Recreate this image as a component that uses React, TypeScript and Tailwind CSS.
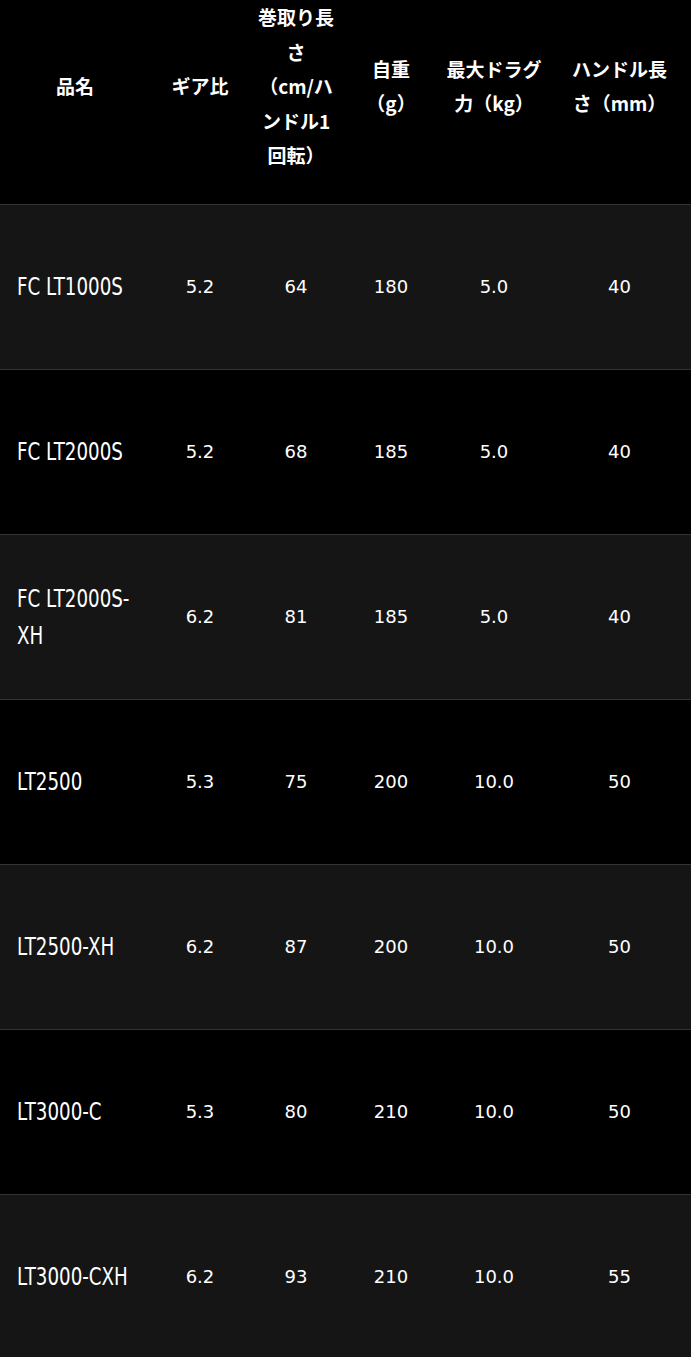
const rows = [
  { name: "FC LT1000S", gear: "5.2", retrieve: "64", weight: "180", drag: "5.0", handle: "40" },
  { name: "FC LT2000S", gear: "5.2", retrieve: "68", weight: "185", drag: "5.0", handle: "40" },
  { name: "FC LT2000S-\nXH", gear: "6.2", retrieve: "81", weight: "185", drag: "5.0", handle: "40" },
  { name: "LT2500", gear: "5.3", retrieve: "75", weight: "200", drag: "10.0", handle: "50" },
  { name: "LT2500-XH", gear: "6.2", retrieve: "87", weight: "200", drag: "10.0", handle: "50" },
  { name: "LT3000-C", gear: "5.3", retrieve: "80", weight: "210", drag: "10.0", handle: "50" },
  { name: "LT3000-CXH", gear: "6.2", retrieve: "93", weight: "210", drag: "10.0", handle: "55" },
];

const headers = [
  "品名",
  "ギア比",
  "巻取り長\nさ\n（cm/ハ\nンドル1\n回転）",
  "自重\n（g）",
  "最大ドラグ\n力（kg）",
  "ハンドル長\nさ（mm）",
];

export default function App() {
  return (
    <div className="w-[691px] bg-black text-white">
      <table className="w-full table-fixed border-collapse">
        <colgroup>
          <col className="w-[150px]" />
          <col className="w-[100px]" />
          <col className="w-[92px]" />
          <col className="w-[98px]" />
          <col className="w-[108px]" />
          <col className="w-[143px]" />
        </colgroup>
        <thead>
          <tr className="h-[204px] border-b border-[#333]">
            {headers.map((h, i) => (
              <th
                key={i}
                className="pb-[31px] align-middle text-center whitespace-pre-line font-bold text-[19px] leading-[34.5px] font-['Noto_Sans_CJK_JP',sans-serif]"
              >
                {h}
              </th>
            ))}
          </tr>
        </thead>
        <tbody>
          {rows.map((r, i) => (
            <tr
              key={i}
              className={`h-[165px] border-b border-[#333] ${i % 2 === 0 ? "bg-[#151515]" : "bg-black"}`}
            >
              <td className="pl-[17px] align-middle">
                <span className="inline-block origin-left scale-x-[0.73] whitespace-pre text-[25px] leading-[37px] font-['DejaVu_Sans',sans-serif]">
                  {r.name}
                </span>
              </td>
              {[r.gear, r.retrieve, r.weight, r.drag, r.handle].map((v, j) => (
                <td key={j} className="text-center text-[18px] font-['DejaVu_Sans',sans-serif]">
                  {v}
                </td>
              ))}
            </tr>
          ))}
        </tbody>
      </table>
    </div>
  );
}
